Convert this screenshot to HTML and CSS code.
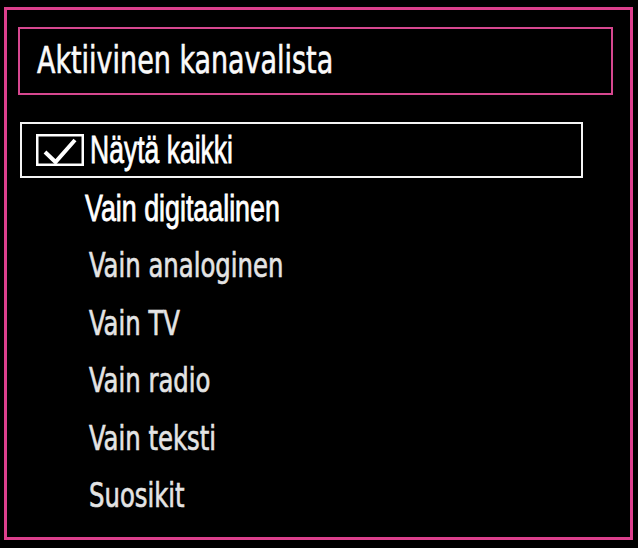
FILE: index.html
```html
<!DOCTYPE html>
<html lang="fi">
<head>
<meta charset="utf-8">
<title>Aktiivinen kanavalista</title>
<link rel="stylesheet" href="styles.css">
</head>
<body>
<div class="frame">
  <div class="title"><span class="title-text">Aktiivinen kanavalista</span></div>
  <div class="selected">
    <svg class="check" width="48" height="32" viewBox="0 0 48 32">
      <rect x="1.25" y="1.25" width="45.5" height="29.5" fill="none" stroke="#fff" stroke-width="2.5"/>
      <polyline points="9,18 19.5,28 39,6" fill="none" stroke="#fff" stroke-width="4" stroke-linejoin="miter"/>
    </svg>
    <span class="geo geo-big">Näytä kaikki</span>
  </div>
  <ul class="list">
    <li class="item item-digi"><span class="geo">Vain digitaalinen</span></li>
    <li class="item"><span class="hum">Vain analoginen</span></li>
    <li class="item"><span class="hum">Vain TV</span></li>
    <li class="item"><span class="hum">Vain radio</span></li>
    <li class="item"><span class="hum">Vain teksti</span></li>
    <li class="item"><span class="hum">Suosikit</span></li>
  </ul>
</div>
</body>
</html>
```
FILE: styles.css
```css
html {
  background: #000;
}
body {
  margin: 0;
  width: 638px;
  height: 548px;
  background: #000;
  overflow: hidden;
}
.frame {
  box-sizing: border-box;
  width: 629px;
  height: 533px;
  margin: 7px 0 0 4px;
  border: 3px solid #dc3f8c;
  padding-top: 17px;
  display: flex;
  flex-direction: column;
}
.title {
  box-sizing: border-box;
  margin-left: 11px;
  width: 595px;
  height: 68px;
  border: 2px solid #d6478f;
  padding-left: 17px;
  display: flex;
  align-items: center;
}
.title-text {
  display: inline-block;
  font-family: "DejaVu Sans Condensed", "DejaVu Sans", sans-serif;
  font-stretch: semi-condensed;
  font-size: 37px;
  line-height: 40px;
  color: #fafafa;
  white-space: nowrap;
  -webkit-text-stroke: 0.6px #fafafa;
  transform: scaleX(0.81);
  transform-origin: left center;
}
.selected {
  box-sizing: border-box;
  margin: 27px 0 0 13px;
  width: 563px;
  height: 56px;
  border: 2px solid #f4f4f4;
  padding-left: 14px;
  display: flex;
  align-items: center;
  gap: 6px;
}
.check {
  flex: none;
  display: block;
}
.geo {
  display: inline-block;
  font-family: "Liberation Sans", Arial, sans-serif;
  font-size: 36px;
  line-height: 40px;
  color: #fff;
  white-space: nowrap;
  -webkit-text-stroke: 0.8px #fff;
  transform: scaleX(0.745);
  transform-origin: left center;
}
.geo-big {
  font-size: 39px;
  transform: scaleX(0.68);
}
.list {
  list-style: none;
  margin: 0;
  padding: 0 0 0 82px;
}
.item {
  height: 57.5px;
  line-height: 57.5px;
}
.item-digi {
  height: 48px;
  line-height: 48px;
  margin-left: -4px;
  margin-top: 11px;
}
.hum {
  display: inline-block;
  font-family: "DejaVu Sans Condensed", "DejaVu Sans", sans-serif;
  font-stretch: semi-condensed;
  font-size: 33px;
  color: #e4e4e4;
  white-space: nowrap;
  -webkit-text-stroke: 0.6px #e4e4e4;
  transform: scaleX(0.82);
  transform-origin: left center;
}
```
